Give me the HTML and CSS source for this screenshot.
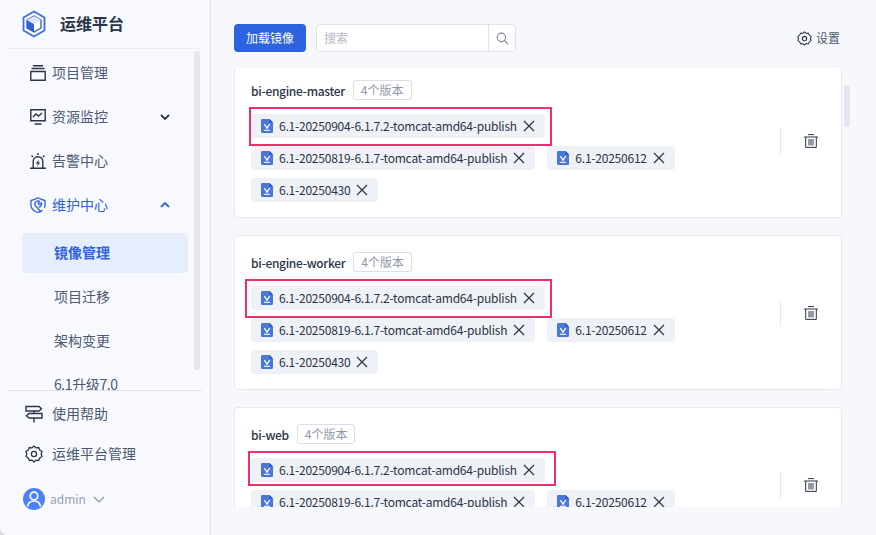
FILE: index.html
```html
<!DOCTYPE html>
<html lang="zh">
<head>
<meta charset="utf-8">
<title>运维平台</title>
<link rel="stylesheet" href="styles.css">
</head>
<body>
<svg class="defs" width="0" height="0">
  <symbol id="file" viewBox="0 0 12 14">
    <path d="M1.200 0H8.500L12 3.500v9.300A1.200 1.200 0 0 1 10.800 14H1.200A1.200 1.200 0 0 1 0 12.800V1.200A1.200 1.200 0 0 1 1.200 0z" fill="#4a76e0"/>
    <path d="M8.500 0L12 3.500H8.500z" fill="#2f55b8"/>
    <path d="M3.300 5L6 9.200 8.700 5" fill="none" stroke="#fff" stroke-width="1.300"/>
    <path d="M3 11.300h6" stroke="#fff" stroke-width="1.100"/>
  </symbol>
  <symbol id="close" viewBox="0 0 12 12">
    <path d="M1 1l10 10M11 1L1 11" fill="none" stroke="currentColor" stroke-width="1.200"/>
  </symbol>
  <symbol id="trash" viewBox="0 0 14 14">
    <path d="M4 .6h6M0 3h14M1.700 3v10.400h10.600V3M5 5v6.500M7 5v6.500M9 5v6.500" fill="none" stroke="currentColor" stroke-width="1"/>
  </symbol>
  <symbol id="gear" viewBox="0 0 18 18">
    <path d="M9 1l2 1.900 2.700-.4 1 2.500 2.300 1.500-.8 2.500.8 2.500-2.300 1.500-1 2.500-2.700-.4L9 17l-2-1.900-2.700.4-1-2.500L1 11.500 1.800 9 1 6.500 3.300 5l1-2.500 2.700.4z" fill="none" stroke="currentColor" stroke-width="1.300" stroke-linejoin="round"/>
    <circle cx="9" cy="9" r="2.600" fill="none" stroke="currentColor" stroke-width="1.300"/>
  </symbol>
</svg>

<div class="app">
  <aside class="sidebar">
    <div class="brand">
      <svg class="brand-logo" width="26" height="28" viewBox="0 0 26 28">
        <path d="M13 1.500L23.500 7.500v13L13 26.500 2.500 20.500v-13z" fill="none" stroke="#3d6fe0" stroke-width="1.800"/>
        <path d="M13 6l7 4v8l-7 4-7-4v-8z" fill="#fff" stroke="#2a4fa8" stroke-width="1.200"/>
        <path d="M6 10l7 4v8l-7-4z" fill="#2f63dc"/>
        <path d="M13 6l7 4-7 4-7-4z" fill="#dce6fb"/>
      </svg>
      <span class="brand-name">运维平台</span>
    </div>

    <div class="nav-scroll">
      <nav class="nav">
        <a class="nav-item">
          <svg class="nav-icon" viewBox="0 0 16 16"><path d="M3 .8h10M1.500 3.500h13M.8 6.500h14.400v8.700H.8z" fill="none" stroke="currentColor" stroke-width="1.400"/></svg>
          <span>项目管理</span>
        </a>
        <a class="nav-item">
          <svg class="nav-icon" viewBox="0 0 16 16"><path d="M.8.800h14.400v11H.8zM3 8l3-3 2.500 2L12 4M4.500 15h7" fill="none" stroke="currentColor" stroke-width="1.400"/></svg>
          <span>资源监控</span>
          <svg class="nav-caret" viewBox="0 0 10 6"><path d="M1 1l4 4 4-4" fill="none" stroke="currentColor" stroke-width="1.800"/></svg>
        </a>
        <a class="nav-item">
          <svg class="nav-icon" viewBox="0 0 16 16"><path d="M3.200 14.500V8.500a4.800 4.800 0 0 1 9.600 0v6M0 15.200h16M8 0v2M1.500 2.500L3 4M14.500 2.500L13 4" fill="none" stroke="currentColor" stroke-width="1.400"/><path d="M8.800 6.500L5.800 10.500h2l-.6 3 3-4h-2z" fill="currentColor"/></svg>
          <span>告警中心</span>
        </a>
        <a class="nav-item active-parent">
          <svg class="nav-icon" viewBox="0 0 16 16"><path d="M12.500 13c-1 1-2.700 2-4.500 2.500C4 14.200 1 12 1 8V3.500C3.500 3 6 2 8 .8c2 1.200 4.500 2.200 7 2.700V8c0 1-.2 2-.5 2.800" fill="none" stroke="currentColor" stroke-width="1.300"/><path d="M9.800 4.300A3.400 3.400 0 0 0 5.200 8.900M5.200 8.900L6.800 10.300l4.200 4.700M9.800 4.300L8 6.200l1.500 1.500 2-1.800a3.400 3.400 0 0 1-3 4.300" fill="none" stroke="currentColor" stroke-width="1.300"/></svg>
          <span>维护中心</span>
          <svg class="nav-caret" viewBox="0 0 10 6"><path d="M1 5l4-4 4 4" fill="none" stroke="currentColor" stroke-width="1.800"/></svg>
        </a>
        <div class="subnav">
          <a class="sub-item active"><span>镜像管理</span></a>
          <a class="sub-item"><span>项目迁移</span></a>
          <a class="sub-item"><span>架构变更</span></a>
          <a class="sub-item tight"><span>6.1升级7.0</span></a>
        </div>
      </nav>
      <div class="nav-thumb"></div>
    </div>

    <div class="side-foot">
      <a class="foot-item">
        <svg class="foot-icon" viewBox="0 0 18 18"><path d="M1 1.500h13l2.500 2.200L14 6H1zM9 6v2.500M4 8.500h13v4.500H4l-2.500-2.200zM9 13v4.500" fill="none" stroke="currentColor" stroke-width="1.400"/></svg>
        <span>使用帮助</span>
      </a>
      <a class="foot-item">
        <svg class="foot-icon"><use href="#gear"/></svg>
        <span>运维平台管理</span>
      </a>
      <div class="user">
        <span class="avatar">
          <svg width="22" height="22" viewBox="0 0 22 22"><circle cx="11" cy="8" r="3.800" fill="none" stroke="#fff" stroke-width="1.700"/><path d="M4.500 18.500c.6-3.800 3-5.500 6.500-5.500s5.900 1.700 6.500 5.500" fill="none" stroke="#fff" stroke-width="1.700"/></svg>
        </span>
        <span class="user-name">admin</span>
        <svg class="user-caret" viewBox="0 0 12 7"><path d="M1 1l5 5 5-5" fill="none" stroke="currentColor" stroke-width="1.100"/></svg>
      </div>
    </div>
  </aside>

  <main class="main">
    <div class="toolbar">
      <button class="btn-primary">加载镜像</button>
      <div class="search">
        <input class="search-input" placeholder="搜索">
        <span class="search-btn">
          <svg width="13" height="13" viewBox="0 0 15 15"><circle cx="6.200" cy="6.200" r="4.900" fill="none" stroke="currentColor" stroke-width="1.300"/><path d="M9.800 9.800l4.400 4.400" stroke="currentColor" stroke-width="1.300"/></svg>
        </span>
      </div>
      <a class="settings">
        <svg class="settings-icon"><use href="#gear"/></svg>
        <span>设置</span>
      </a>
    </div>

    <div class="list-wrap">
      <div class="list">
        <section class="card">
          <div class="card-body">
            <div class="card-title"><b>bi-engine-master</b><span class="count">4个版本</span></div>
            <div class="chips">
              <span class="chip marked"><svg class="chip-file"><use href="#file"/></svg>6.1-20250904-6.1.7.2-tomcat-amd64-publish<svg class="chip-x"><use href="#close"/></svg></span>
              <span class="chip"><svg class="chip-file"><use href="#file"/></svg>6.1-20250819-6.1.7-tomcat-amd64-publish<svg class="chip-x"><use href="#close"/></svg></span>
              <span class="chip"><svg class="chip-file"><use href="#file"/></svg>6.1-20250612<svg class="chip-x"><use href="#close"/></svg></span>
              <span class="chip"><svg class="chip-file"><use href="#file"/></svg>6.1-20250430<svg class="chip-x"><use href="#close"/></svg></span>
            </div>
          </div>
          <div class="card-action"><svg class="trash"><use href="#trash"/></svg></div>
        </section>

        <section class="card">
          <div class="card-body">
            <div class="card-title"><b>bi-engine-worker</b><span class="count">4个版本</span></div>
            <div class="chips">
              <span class="chip marked marked-wide"><svg class="chip-file"><use href="#file"/></svg>6.1-20250904-6.1.7.2-tomcat-amd64-publish<svg class="chip-x"><use href="#close"/></svg></span>
              <span class="chip"><svg class="chip-file"><use href="#file"/></svg>6.1-20250819-6.1.7-tomcat-amd64-publish<svg class="chip-x"><use href="#close"/></svg></span>
              <span class="chip"><svg class="chip-file"><use href="#file"/></svg>6.1-20250612<svg class="chip-x"><use href="#close"/></svg></span>
              <span class="chip"><svg class="chip-file"><use href="#file"/></svg>6.1-20250430<svg class="chip-x"><use href="#close"/></svg></span>
            </div>
          </div>
          <div class="card-action"><svg class="trash"><use href="#trash"/></svg></div>
        </section>

        <section class="card">
          <div class="card-body">
            <div class="card-title"><b>bi-web</b><span class="count">4个版本</span></div>
            <div class="chips">
              <span class="chip marked marked-last"><svg class="chip-file"><use href="#file"/></svg>6.1-20250904-6.1.7.2-tomcat-amd64-publish<svg class="chip-x"><use href="#close"/></svg></span>
              <span class="chip"><svg class="chip-file"><use href="#file"/></svg>6.1-20250819-6.1.7-tomcat-amd64-publish<svg class="chip-x"><use href="#close"/></svg></span>
              <span class="chip"><svg class="chip-file"><use href="#file"/></svg>6.1-20250612<svg class="chip-x"><use href="#close"/></svg></span>
              <span class="chip"><svg class="chip-file"><use href="#file"/></svg>6.1-20250430<svg class="chip-x"><use href="#close"/></svg></span>
            </div>
          </div>
          <div class="card-action"><svg class="trash"><use href="#trash"/></svg></div>
        </section>
      </div>
    </div>
    <div class="main-thumb"></div>
  </main>
</div>
</body>
</html>
```

FILE: styles.css
```css
* {
  box-sizing: border-box;
}

html, body {
  margin: 0;
  height: 100%;
  overflow: hidden;
  background: #d9dbe0;
}

body {
  font-family: "Noto Sans CJK SC", "Noto Sans", sans-serif;
  font-size: 14px;
  color: #2b3548;
}

.defs {
  position: absolute;
}

.app {
  display: flex;
  height: 535px;
  background: #f7f8fc;
  border-bottom-left-radius: 8px;
  overflow: hidden;
}

/* sidebar */
.sidebar {
  display: flex;
  flex-direction: column;
  width: 211px;
  flex: none;
  background: #f8f9fe;
  border-right: 1px solid #dfe2ec;
}

.brand {
  display: flex;
  align-items: center;
  gap: 13px;
  height: 49px;
  margin: 0 8px;
  padding-left: 13px;
  border-bottom: 1px solid #eceef5;
}

.brand-logo {
  margin-top: -1px;
}

.brand-name {
  margin-top: -2px;
  font-size: 16px;
  font-weight: 700;
  color: #2b3548;
}

.nav-scroll {
  position: relative;
  flex: 1;
  overflow: hidden;
}

.nav {
  padding: 2px 22px 0;
}

.nav-item {
  display: flex;
  align-items: center;
  height: 44px;
  margin: 0 0 0 8px;
  color: #4d5a72;
}

.nav-item span,
.sub-item span,
.foot-item span {
  margin-top: -2px;
}

.nav-icon {
  width: 16px;
  height: 16px;
  margin-right: 6px;
  flex: none;
  color: #2b3548;
}

.nav-caret {
  width: 10px;
  height: 6px;
  margin-left: 52px;
  color: #2b3548;
}

.active-parent,
.active-parent .nav-icon,
.active-parent .nav-caret {
  color: #2f63dc;
}

.subnav {
  display: flex;
  flex-direction: column;
  gap: 4px;
  margin-top: 6px;
}

.sub-item {
  display: flex;
  align-items: center;
  height: 40px;
  padding-left: 32px;
  border-radius: 4px;
  color: #4d5a72;
  white-space: nowrap;
}

.sub-item.active {
  background: #e6eefd;
  color: #2f63dc;
  font-weight: 700;
}

.sub-item.tight {
  letter-spacing: -0.4px;
}

.nav-thumb {
  position: absolute;
  top: 2px;
  left: 194px;
  width: 6px;
  height: 319px;
  border-radius: 3px;
  background: #e6e7ee;
}

.side-foot {
  margin: 0 8px;
  height: 145px;
  padding-top: 3px;
  border-top: 1px solid #dfe2ec;
}

.foot-item {
  display: flex;
  align-items: center;
  height: 40px;
  padding-left: 17px;
  color: #4d5a72;
}

.foot-icon {
  width: 18px;
  height: 18px;
  margin-right: 9px;
  color: #2b3548;
}

.user {
  display: flex;
  align-items: center;
  height: 22px;
  margin-top: 14px;
  padding-left: 15px;
}

.avatar {
  display: flex;
  width: 22px;
  height: 22px;
  border-radius: 50%;
  background: #4f80f5;
}

.user-name {
  margin-left: 5px;
  margin-top: -1px;
  font-size: 12px;
  color: #97a0b2;
}

.user-caret {
  width: 12px;
  height: 7px;
  margin-left: 7px;
  color: #8a93a6;
}

/* main */
.main {
  position: relative;
  flex: 1;
  min-width: 0;
  padding: 24px 34px 0 23px;
}

.toolbar {
  display: flex;
  align-items: center;
  height: 28px;
}

.btn-primary {
  width: 72px;
  height: 28px;
  padding: 0 0 2px;
  border: 0;
  border-radius: 4px;
  background: #2d63de;
  color: #fff;
  font: inherit;
  font-size: 12px;
}

.search {
  display: flex;
  width: 200px;
  height: 28px;
  margin-left: 10px;
  border: 1px solid #dfe2ec;
  border-radius: 4px;
  background: #fff;
}

.search-input {
  flex: 1;
  min-width: 0;
  padding: 0 7px 2px;
  border: 0;
  outline: 0;
  background: transparent;
  font: inherit;
  font-size: 12px;
}

.search-input::placeholder {
  color: #b5bac6;
}

.search-btn {
  display: flex;
  align-items: center;
  justify-content: center;
  width: 27px;
  border-left: 1px solid #dfe2ec;
  color: #7f8899;
}

.settings {
  display: flex;
  align-items: center;
  gap: 4px;
  margin-left: auto;
  margin-right: 2px;
  font-size: 12px;
  color: #4d5a72;
}

.settings span {
  margin-top: -1px;
}

.settings-icon {
  width: 15px;
  height: 15px;
  color: #2b3548;
}

.list-wrap {
  height: 439px;
  margin-top: 16px;
  overflow: hidden;
}

.list {
  display: flex;
  flex-direction: column;
  gap: 17px;
  margin-top: -5px;
}

.card {
  display: flex;
  flex: none;
  height: 155px;
  padding: 16px 0 15px 16px;
  border: 1px solid #e6e9f2;
  border-radius: 4px;
  background: #fff;
}

.card-body {
  flex: 1;
  min-width: 0;
  margin-right: 16px;
}

.card-title {
  display: flex;
  align-items: center;
  gap: 8px;
  height: 20px;
  font-size: 12px;
}

.card-title b {
  font-weight: 500;
  letter-spacing: -0.3px;
}

.count {
  height: 20px;
  padding: 0 7px;
  border: 1px solid #dcdfe9;
  border-radius: 3px;
  color: #8f98aa;
  line-height: 18px;
}

.chips {
  display: flex;
  flex-wrap: wrap;
  gap: 8px 12px;
  margin-top: 14px;
}

.chip {
  position: relative;
  display: inline-flex;
  align-items: center;
  height: 24px;
  padding: 0 10px 2px;
  border-radius: 4px;
  background: #eef1f6;
  font-size: 12px;
  letter-spacing: -0.22px;
  white-space: nowrap;
}

.chip-file {
  width: 12px;
  height: 14px;
  margin: 2px 6px 0 0;
}

.chip-x {
  width: 12px;
  height: 12px;
  margin: 2px 0 0 6px;
}

/* red annotation boxes drawn over the first chip of each card */
.marked::after {
  content: "";
  position: absolute;
  top: -7px;
  right: -7px;
  bottom: -8px;
  left: -2px;
  border: 2px solid #ee2f6b;
}

.marked-wide::after {
  left: -6px;
}

.marked-last::after {
  top: -7px;
  right: -11px;
  bottom: -4px;
  left: -3px;
}

.card-action {
  display: flex;
  align-items: center;
  justify-content: center;
  align-self: center;
  flex: none;
  width: 61px;
  height: 26px;
  border-left: 1px solid #e6e9f2;
}

.trash {
  width: 14px;
  height: 14px;
  color: #2b3548;
}

.main-thumb {
  position: absolute;
  top: 85px;
  left: 633px;
  width: 6px;
  height: 42px;
  border-radius: 3px;
  background: #e6e7ee;
}
```
